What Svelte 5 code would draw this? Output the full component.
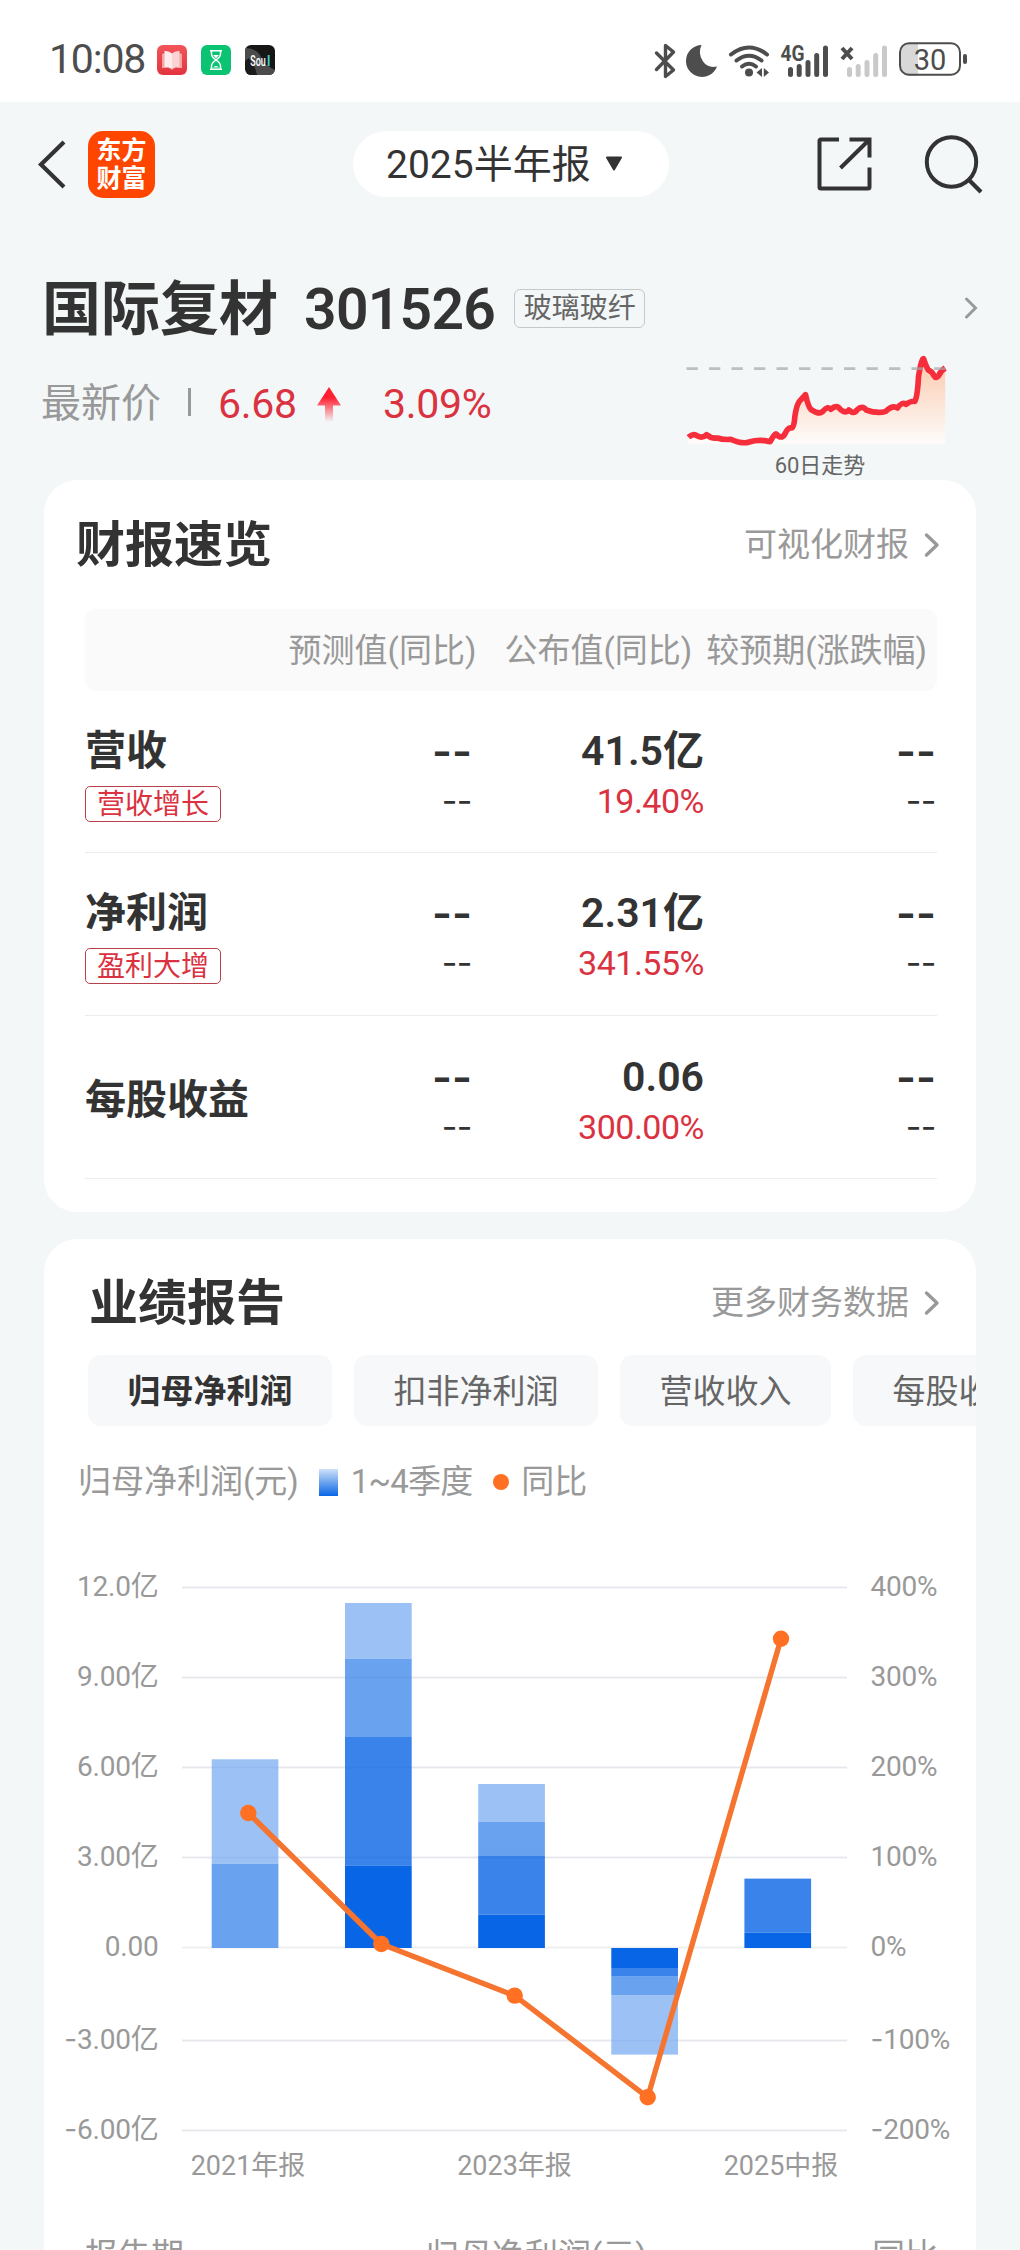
<script>
  const rows = [
    { name: '营收', tag: '营收增长', value: '41.5亿', rate: '19.40%' },
    { name: '净利润', tag: '盈利大增', value: '2.31亿', rate: '341.55%' },
    { name: '每股收益', tag: '', value: '0.06', rate: '300.00%' },
  ];

  const tabs = ['归母净利润', '扣非净利润', '营收收入', '每股收益'];

  // Horizontal grid lines with their left and right axis labels
  const grid = [
    { y: 37.5, left: '12.0亿', right: '400%' },
    { y: 127.5, left: '9.00亿', right: '300%' },
    { y: 217.5, left: '6.00亿', right: '200%' },
    { y: 307.5, left: '3.00亿', right: '100%' },
    { y: 397.5, left: '0.00', right: '0%' },
    { y: 490.5, left: '3.00亿', right: '100%', neg: true },
    { y: 580.5, left: '6.00亿', right: '200%', neg: true },
  ];

  const shades = ['#0866e6', '#3983ea', '#69a2ef', '#9bc1f5'];
  // Each segment: [shade index, top, bottom]
  const bars = [
    { x: 167.7, seg: [[3, 209.3, 313.6], [2, 313.6, 398]] },
    { x: 301, seg: [[3, 53, 108.6], [2, 108.6, 187], [1, 187, 315.4], [0, 315.4, 398]] },
    { x: 434.2, seg: [[3, 234, 271.8], [2, 271.8, 305.3], [1, 305.3, 364.7], [0, 364.7, 398]] },
    { x: 567.3, seg: [[0, 398, 418.8], [1, 418.8, 426.7], [2, 426.7, 445.6], [3, 445.6, 504.6]] },
    { x: 700.4, seg: [[1, 328.6, 382.7], [0, 382.7, 398]] },
  ];
  const points = [[204.3, 263], [337.3, 394], [470.7, 445.6], [603.7, 547.3], [737, 88.8]];
  const linePath = points.map((p) => p.join(',')).join(' ');
  const xLabels = [
    { x: 204, text: '2021年报' },
    { x: 470.5, text: '2023年报' },
    { x: 737, text: '2025中报' },
  ];
</script>

{#snippet chevron()}
  <svg class="chevron" viewBox="0 0 16 26" width="16" height="26">
    <path d="M2.5 3 L13 13 L2.5 23" fill="none" stroke="#999" stroke-width="3.4" stroke-linecap="round" stroke-linejoin="round" />
  </svg>
{/snippet}

<div class="screen">
  <header class="status">
    <span class="clock">10:08</span>
    <div class="apps">
      <svg viewBox="0 0 30 30" width="30" height="30">
        <defs>
          <linearGradient id="book" x1="0" y1="0" x2="0" y2="1">
            <stop offset="0" stop-color="#f2555a" /><stop offset="1" stop-color="#e23440" />
          </linearGradient>
        </defs>
        <rect width="30" height="30" rx="6" fill="url(#book)" />
        <path d="M5 9 L8 8 V22 L15 24 L22 22 V8 L25 9 V23 H17 L15 25 L13 23 H5 Z" fill="#f7a6a6" />
        <path d="M7.500 6 Q12 5.500 15 8.500 V24 Q12 22 7.500 22 Z" fill="#fdeceb" />
        <path d="M22.500 6 Q18 5.500 15 8.500 V24 Q18 22 22.500 22 Z" fill="#fbd3d2" />
      </svg>
      <svg viewBox="0 0 30 30" width="30" height="30">
        <rect width="30" height="30" rx="6" fill="#0bc371" />
        <g fill="none" stroke="#fff" stroke-width="1.500">
          <path d="M9 5.800 H21 M9 24.200 H21 M10.500 6 V9 Q10.500 12 15 15 Q19.500 12 19.500 9 V6 M10.500 24 V21 Q10.500 18 15 15 Q19.500 18 19.500 21 V24" />
        </g>
        <path d="M12 10 H18 L15 13.500 Z M12 22.500 Q15 19.500 18 22.500 Z" fill="#fff" />
      </svg>
      <svg viewBox="0 0 30 30" width="30" height="30">
        <defs><clipPath id="tile"><rect width="30" height="30" rx="6" /></clipPath></defs>
        <g clip-path="url(#tile)">
          <rect width="30" height="30" fill="#161616" />
          <path d="M0 3 Q10 3 15 10 L20 19 L30 25 V30 H12 Q4 20 0 17 Z" fill="#4b4b4b" />
          <path d="M4 13 Q10 20 12 30 H3 Q0 22 0 16 Z" fill="#1b1b1b" />
        </g>
        <text class="soul" x="5.300" y="20.500" textLength="15.500" lengthAdjust="spacingAndGlyphs" fill="#fff">Sou</text>
        <text class="soul" x="21.800" y="20.500" fill="#3ecfcf">l</text>
      </svg>
    </div>
    <svg class="signals" viewBox="0 0 320 40" width="320" height="40">
      <!-- bluetooth -->
      <path d="M7 14 L24 31 L16 37.500 V6.500 L24 13 L7 30.500" transform="translate(-.5 -1)" fill="none" stroke="#4d4d4d" stroke-width="3.400" stroke-linejoin="round" stroke-linecap="round" />
      <!-- moon -->
      <path d="M51.500 5 A16 16 0 1 0 67 26.500 Q58 28.500 53 21.500 Q47.500 13.500 51.500 5 Z" fill="#4d4d4d" />
      <!-- wifi -->
      <g fill="none" stroke="#4d4d4d" stroke-width="4" stroke-linecap="round">
        <path d="M81 14.500 Q99 0.500 117 14.500" />
        <path d="M86.500 20.500 Q99 11 111.500 20.500" />
        <path d="M92 26.500 Q99 21 106 26.500" />
      </g>
      <circle cx="99" cy="32.500" r="4" fill="#4d4d4d" />
      <path d="M112 28 V37 L106.500 32.500 Z M113.800 28 V37 L119 32.500 Z" fill="#4d4d4d" />
      <!-- mobile signal -->
      <text class="net" x="130.500" y="20.500" textLength="24" lengthAdjust="spacingAndGlyphs">4G</text>
      <g stroke="#4d4d4d" stroke-width="5" stroke-linecap="round">
        <path d="M140.500 29.500 V34.500 M149.200 26.500 V34.500 M158 22.500 V34.500 M166.700 15.500 V34.500 M175.500 8 V34.500" />
      </g>
      <path d="M192 8 L202 19 M202 8 L192 19" stroke="#4d4d4d" stroke-width="4" />
      <g stroke="#c9c9c9" stroke-width="5" stroke-linecap="round">
        <path d="M199.500 29.500 V34.500 M208.200 26.500 V34.500 M217 22.500 V34.500 M225.700 15.500 V34.500 M234.500 8 V34.500" />
      </g>
      <!-- battery -->
      <path d="M258 4 H268 V36 H258 Q251 35 251 27 V12 Q251 5 258 4 Z" fill="#d8d8d8" />
      <rect x="250" y="3.200" width="60" height="31.600" rx="9" fill="none" stroke="#4d4d4d" stroke-width="2" />
      <rect x="313" y="14" width="4" height="10" rx="2" fill="#4d4d4d" />
      <text class="charge" x="280" y="29.500" text-anchor="middle">30</text>
    </svg>
  </header>

  <nav class="nav">
    <svg class="back" viewBox="0 0 30 52" width="30" height="52">
      <path d="M27 4 L4 26.500 L27 49" fill="none" stroke="#333" stroke-width="4.200" />
    </svg>
    <div class="logo"><span>东方</span><span>财富</span></div>
    <div class="period">
      <span>2025半年报</span>
      <svg viewBox="0 0 18 16" width="18" height="16"><path d="M2 1.500 H16 L9 13.500 Z" fill="#333" stroke="#333" stroke-width="2" stroke-linejoin="round" /></svg>
    </div>
    <svg class="share" viewBox="0 0 56 56" width="56" height="56">
      <g fill="none" stroke="#333" stroke-width="4">
        <path d="M23 3.500 H5 Q3.500 3.500 3.500 5 V51 Q3.500 52.500 5 52.500 H52 Q53.500 52.500 53.500 51 V31.500" />
        <path d="M33.500 3.500 H53.500 V21.500 M53 4 L24.500 32" />
      </g>
    </svg>
    <svg class="search" viewBox="0 0 60 60" width="60" height="60">
      <circle cx="28.500" cy="28" r="24.700" fill="none" stroke="#333" stroke-width="4" />
      <path d="M46 46 L58 58" stroke="#333" stroke-width="4.200" />
    </svg>
  </nav>

  <section class="stock">
    <div class="title-row">
      <span class="stock-name">国际复材</span>
      <span class="stock-code">301526</span>
      <span class="industry">玻璃玻纤</span>
      <svg class="go" viewBox="0 0 14 22" width="14" height="22">
        <path d="M2.500 2 L11.500 11 L2.500 20" fill="none" stroke="#999" stroke-width="3" stroke-linecap="round" />
      </svg>
    </div>
    <div class="price-row">
      <span class="label">最新价</span>
      <i class="divider"></i>
      <span class="price">6.68</span>
      <svg class="up" viewBox="0 0 24 36" width="24" height="36">
        <defs>
          <linearGradient id="up" x1="0" y1="0" x2="0" y2="1">
            <stop offset=".3" stop-color="#ff1f30" /><stop offset="1" stop-color="#ff1f30" stop-opacity="0" />
          </linearGradient>
        </defs>
        <path d="M12 1 L24 19.500 H16 V36 H8 V19.500 H0 Z" fill="url(#up)" />
      </svg>
      <span class="price change">3.09%</span>
      <div class="trend">
        <svg viewBox="550 300 800 300" width="267" height="100">
          <defs>
            <linearGradient id="area" x1="0" y1="0" x2="0" y2="1">
              <stop offset="0" stop-color="#fbc9ad" /><stop offset="1" stop-color="#fdfcfb" />
            </linearGradient>
          </defs>
          <path d="M563 560 Q577 548 590 558 T617 556 T650 563 T680 569 Q725 580 750 573 Q780 567 805 574 Q822 552 826 553 Q844 565 864 535 L878 530 Q882 475 895 455 L914 434 Q928 475 940 482 Q955 494 985 474 Q1008 464 1028 484 Q1045 478 1060 486 Q1082 464 1100 480 Q1130 492 1155 484 Q1180 465 1190 474 Q1205 455 1220 463 L1242 452 Q1250 390 1258 340 L1268 326 L1282 360 L1306 385 L1333 354 V582 H563 Z" fill="url(#area)" />
          <path d="M563 562 Q577 548 590 558 Q605 566 617 554 Q630 566 650 564 Q665 570 690 568 Q725 583 745 576 Q775 567 808 575 Q822 550 826 552 Q842 570 852 552 Q862 530 872 534 Q880 534 882 500 Q887 465 895 455 L914 434 Q922 470 930 478 Q957 497 968 482 Q982 467 990 478 Q1008 462 1018 478 Q1035 492 1044 480 Q1060 494 1068 480 Q1085 464 1096 480 Q1130 492 1155 484 Q1175 464 1190 474 Q1203 454 1216 463 Q1230 452 1242 454 Q1250 440 1253 380 Q1262 325 1268 326 Q1274 345 1282 360 Q1294 364 1300 378 Q1306 388 1314 376 Q1320 362 1333 354" fill="none" stroke="#f62d3b" stroke-width="17" stroke-linejoin="round" />
          <path d="M557 356 H1335" stroke="#a5a8a8" stroke-opacity=".7" stroke-width="8" stroke-dasharray="34 33.500" />
        </svg>
        <span>60日走势</span>
      </div>
    </div>
  </section>

  <section class="card overview">
    <div class="card-head">
      <h2>财报速览</h2>
      <span class="more">可视化财报</span>
      {@render chevron()}
    </div>
    <div class="table">
      <div class="thead"><span>预测值(同比)</span><span>公布值(同比)</span><span>较预期(涨跌幅)</span></div>
      {#each rows as row}
        <div class="trow">
          <div class="item">
            <span class="item-name">{row.name}</span>
            {#if row.tag}<span class="item-tag">{row.tag}</span>{/if}
          </div>
          <div class="cell"><b class="dash">--</b><span class="dash">--</span></div>
          <div class="cell mid"><b>{row.value}</b><span class="rate">{row.rate}</span></div>
          <div class="cell"><b class="dash">--</b><span class="dash">--</span></div>
        </div>
      {/each}
    </div>
  </section>

  <section class="card report">
    <div class="card-head">
      <h2>业绩报告</h2>
      <span class="more">更多财务数据</span>
      {@render chevron()}
    </div>
    <div class="tabs">
      {#each tabs as tab, i}
        <span class="tab" class:active={i === 0}>{tab}</span>
      {/each}
    </div>
    <div class="legend">
      <span>归母净利润(元)</span>
      <i class="swatch"></i>
      <span class="quarters">1~4季度</span>
      <i class="dot"></i>
      <span>同比</span>
    </div>
    <svg class="chart" viewBox="0 0 932 660" width="932" height="660">
      {#each grid as g}
        <path d="M138 {g.y} H803" stroke="#efeff1" stroke-width="1.800" />
        <text class="axis value" x="114.500" y={g.y + 8.5} text-anchor="end">{#if g.neg}<tspan class="hyphen">-</tspan>{/if}{g.left}</text>
        <text class="axis value" x="826.500" y={g.y + 8.5}>{#if g.neg}<tspan class="hyphen">-</tspan>{/if}{g.right}</text>
      {/each}
      {#each bars as bar}
        {#each bar.seg as [shade, top, bottom]}
          <rect x={bar.x} y={top} width="66.700" height={bottom - top} fill={shades[shade]} />
        {/each}
      {/each}
      {#each grid.filter((g) => g.y !== 397.5) as g}
        <path d="M138 {g.y} H803" stroke="#003c96" stroke-opacity=".04" stroke-width="1.500" />
      {/each}
      <polyline points={linePath} fill="none" stroke="#f57430" stroke-width="5.400" stroke-linejoin="round" />
      {#each points as [cx, cy]}
        <circle {cx} {cy} r="8.200" fill="#ff7022" />
      {/each}
      {#each xLabels as l}
        <text class="axis" x={l.x} y="625" text-anchor="middle">{l.text}</text>
      {/each}
    </svg>
    <div class="detail-head"><span>报告期</span><span>归母净利润(元)</span><span>同比</span></div>
  </section>
</div>

<style>
  :global(body) {
    margin: 0;
    background: #f3f7f8;
  }
  .screen {
    width: 1020px;
    height: 2250px;
    overflow: hidden;
    background: #f3f7f8;
    color: #333;
    font-family: Roboto, 'Noto Sans CJK SC', sans-serif;
    font-size: 33px;
    line-height: 1.2;
    white-space: nowrap;
  }
  svg {
    display: block;
    flex: none;
  }
  .status {
    box-sizing: border-box;
    height: 102px;
    padding: 18px 50px 0 49px;
    background: #fff;
    display: flex;
    align-items: center;
    color: #4d4d4d;
  }
  .clock {
    width: 108px;
    font-size: 41px;
    letter-spacing: -1.2px;
  }
  .apps {
    display: flex;
    gap: 14px;
  }
  .signals {
    margin-left: auto;
    margin-top: -1px;
  }
  .soul {
    font-size: 15px;
    font-weight: 500;
  }
  .net {
    font-size: 22px;
    font-weight: 700;
    fill: #4d4d4d;
  }
  .charge {
    font-size: 29px;
    fill: #4d4d4d;
  }
  .nav {
    height: 124px;
    display: flex;
    align-items: center;
  }
  .back {
    margin: 0 21px 0 37px;
  }
  .logo {
    width: 67px;
    height: 67px;
    box-sizing: border-box;
    padding: 6px 0 5px;
    border-radius: 15px;
    background: #ff4600;
    color: #fff;
    display: flex;
    flex-direction: column;
    align-items: center;
    justify-content: space-around;
    font-size: 25px;
    font-weight: 700;
    line-height: 27px;
  }
  .period {
    width: 316px;
    height: 66px;
    margin-left: 198px;
    box-sizing: border-box;
    padding-left: 33px;
    border-radius: 33px;
    background: #fff;
    display: flex;
    align-items: center;
    gap: 14px;
    font-size: 39px;
  }
  .period span {
    padding-top: 3px;
  }
  .share {
    margin: 0 51px 0 147px;
  }
  .stock {
    height: 254px;
  }
  .title-row {
    height: 164px;
    padding: 0 42px;
    display: flex;
    align-items: center;
  }
  .stock-name {
    font-size: 59px;
    font-weight: 600;
    margin: 5px 26px 0 0;
  }
  .stock-code {
    font-size: 57px;
    font-weight: 600;
    letter-spacing: -0.7px;
    margin: 5px 19px 0 0;
  }
  .industry {
    box-sizing: border-box;
    width: 131px;
    height: 39px;
    border: 1.500px solid #c4c8ca;
    border-radius: 6px;
    color: #666;
    font-size: 28px;
    line-height: 37px;
    text-align: center;
  }
  .go {
    margin-left: auto;
  }
  .price-row {
    height: 90px;
    padding-left: 41px;
    display: flex;
    align-items: flex-start;
  }
  .price-row > * {
    margin-top: -12px;
  }
  .label {
    font-size: 40px;
    line-height: 52px;
    color: #999;
  }
  .price-row .divider {
    width: 3px;
    height: 28px;
    margin: -2px 27px 0 27px;
    background: #999;
  }
  .price {
    width: 101px;
    font-size: 41px;
    line-height: 52px;
    color: #da3240;
    letter-spacing: -0.3px;
  }
  .price-row .up {
    margin: -4px 42px 0 -2px;
  }
  .change {
    width: 301px;
  }
  .price-row .trend {
    width: 267px;
    margin-top: -40px;
    display: flex;
    flex-direction: column;
    align-items: center;
    color: #666;
    font-size: 22px;
    line-height: 32px;
  }
  .trend span {
    padding-left: 5px;
  }
  .card {
    margin: 0 44px;
    border-radius: 33px;
    background: #fff;
    overflow: hidden;
  }
  .card-head {
    height: 129px;
    padding: 0 36px 0 32px;
    display: flex;
    align-items: center;
  }
  h2 {
    flex: 1;
    margin: 3px 0 0;
    font-size: 49px;
    font-weight: 600;
  }
  .more {
    color: #999;
  }
  .chevron {
    margin-left: 15px;
  }
  .overview {
    height: 732px;
  }
  .table {
    margin: 0 39px 0 41px;
  }
  .thead {
    height: 82px;
    box-sizing: border-box;
    padding: 2px 10px 0 0;
    border-radius: 11px;
    background: #fafafa;
    color: #999;
    display: flex;
    justify-content: flex-end;
    align-items: center;
  }
  .thead span:nth-child(1) {
    margin-right: 28px;
  }
  .thead span:nth-child(2) {
    margin-right: 14px;
  }
  .trow {
    box-sizing: border-box;
    height: 163px;
    border-bottom: 1.500px solid #ececec;
    display: flex;
  }
  .trow:nth-child(2) {
    height: 162px;
  }
  .item {
    width: 180px;
    box-sizing: border-box;
    padding-bottom: 6px;
    display: flex;
    flex-direction: column;
    justify-content: center;
    align-items: flex-start;
  }
  .trow:last-child .item {
    padding: 5px 0 0;
  }
  .item-name {
    font-size: 41px;
    font-weight: 600;
    line-height: 54px;
  }
  .item-tag {
    box-sizing: border-box;
    width: 136px;
    height: 36px;
    margin: 8px 0 -8px;
    border: 1.500px solid #b8404a;
    border-radius: 5px;
    color: #da3240;
    font-size: 28px;
    line-height: 35px;
    text-align: center;
  }
  .cell {
    width: 207px;
    padding-top: 34px;
    display: flex;
    flex-direction: column;
    align-items: flex-end;
  }
  .trow:last-child .cell {
    padding-top: 35px;
  }
  .cell.mid {
    width: 232px;
  }
  .cell:last-child {
    width: 232px;
  }
  .cell b {
    font-size: 41px;
    font-weight: 600;
    line-height: 52px;
  }
  .cell span {
    font-size: 34px;
    line-height: 48px;
    letter-spacing: -0.5px;
  }
  .cell .rate {
    color: #da3240;
  }
  .cell .dash {
    font-family: Inter, sans-serif;
  }
  .cell b.dash {
    font-size: 43px;
  }
  .cell span.dash {
    font-size: 34px;
  }
  .report {
    height: 1100px;
    margin-top: 27px;
  }
  .report .card-head {
    height: 116px;
    padding-left: 45px;
    box-sizing: border-box;
    padding-top: 11px;
  }
  .tabs {
    display: flex;
    gap: 22px;
    padding-left: 44px;
  }
  .tab {
    height: 71px;
    padding: 0 39.500px;
    flex: none;
    border-radius: 13px;
    background: #f7f8fa;
    color: #666;
    line-height: 73px;
  }
  .tab.active {
    color: #333;
    font-weight: 600;
  }
  .legend {
    height: 50px;
    margin-top: 31px;
    padding-left: 34px;
    display: flex;
    align-items: center;
    color: #999;
  }
  .swatch {
    width: 19px;
    height: 27px;
    margin: 0 13px 0 20px;
    background: linear-gradient(#cfe0f7, #0866e6);
  }
  .quarters {
    letter-spacing: -0.8px;
  }
  .dot {
    width: 16px;
    height: 16px;
    margin: 0 12px 0 21px;
    border-radius: 50%;
    background: #ff7022;
  }
  .chart {
    margin-top: 43px;
  }
  .axis {
    font-size: 27px;
    fill: #999;
  }
  .axis.value {
    font-size: 28px;
    letter-spacing: -0.2px;
  }
  .hyphen {
    font-family: Inter, sans-serif;
  }
  .detail-head {
    margin-top: 26px;
    padding-left: 41px;
    display: grid;
    grid-template-columns: 341px 446px auto;
    color: #999;
  }
</style>
